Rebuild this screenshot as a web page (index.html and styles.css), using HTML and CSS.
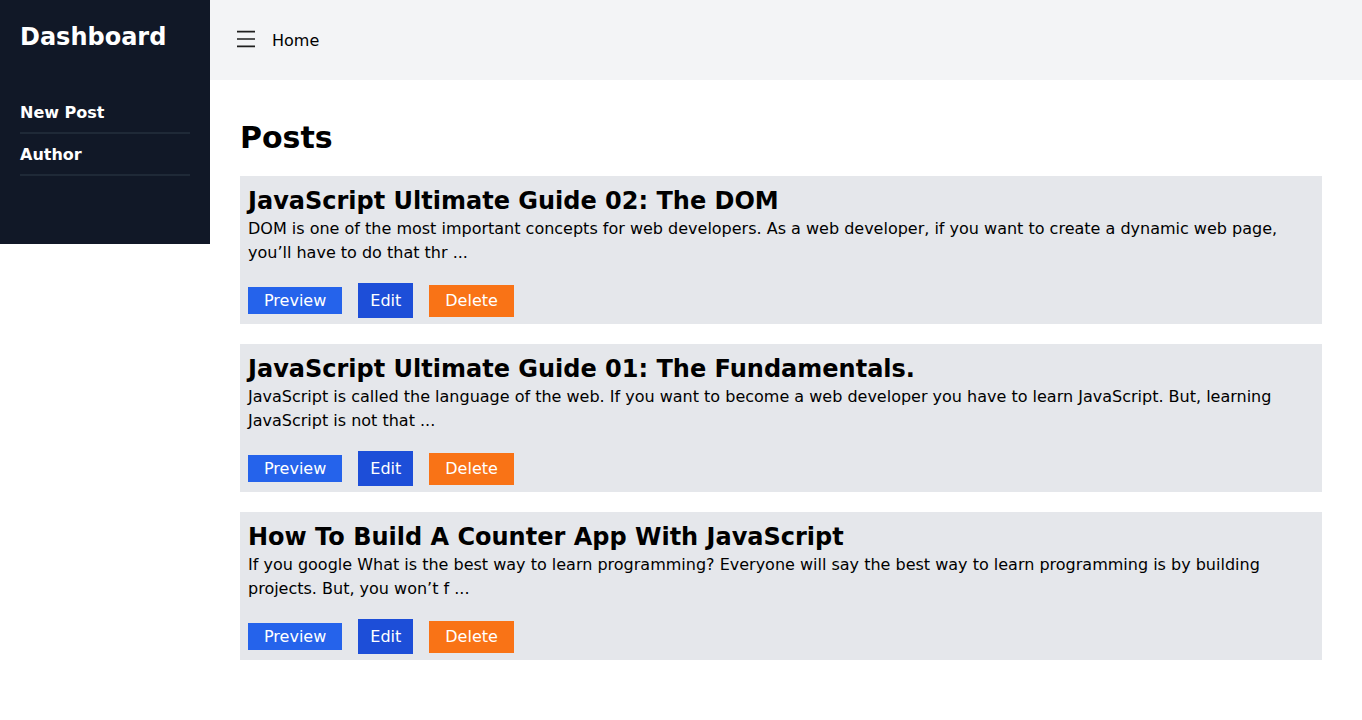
FILE: index.html
```html
<!DOCTYPE html>
<html lang="en">
<head>
<meta charset="utf-8">
<title>Dashboard</title>
<link rel="stylesheet" href="styles.css">
</head>
<body>
<div class="layout">
  <aside class="sidebar">
    <h2 class="brand">Dashboard</h2>
    <nav class="nav">
      <a class="nav-item" href="#">New Post</a>
      <a class="nav-item" href="#">Author</a>
    </nav>
  </aside>
  <div class="content">
    <header class="topbar">
      <svg class="burger" width="18" height="20" viewBox="0 0 18 20" aria-hidden="true">
        <path d="M0 1.6H18M0 9H18M0 16.4H18" stroke="#1f1f1f" stroke-width="1.7" fill="none"/>
      </svg>
      <span class="home">Home</span>
    </header>
    <main class="main">
      <h1 class="page-title">Posts</h1>
      <div class="posts">
        <article class="post">
          <h3 class="post-title">JavaScript Ultimate Guide 02: The DOM</h3>
          <p class="post-body">DOM is one of the most important concepts for web developers. As a web developer, if you want to create a dynamic web page, you’ll have to do that thr ...</p>
          <div class="actions">
            <button class="btn btn-preview">Preview</button>
            <button class="btn btn-edit">Edit</button>
            <button class="btn btn-delete">Delete</button>
          </div>
        </article>
        <article class="post">
          <h3 class="post-title">JavaScript Ultimate Guide 01: The Fundamentals.</h3>
          <p class="post-body">JavaScript is called the language of the web. If you want to become a web developer you have to learn JavaScript. But, learning JavaScript is not that ...</p>
          <div class="actions">
            <button class="btn btn-preview">Preview</button>
            <button class="btn btn-edit">Edit</button>
            <button class="btn btn-delete">Delete</button>
          </div>
        </article>
        <article class="post">
          <h3 class="post-title">How To Build A Counter App With JavaScript</h3>
          <p class="post-body">If you google What is the best way to learn programming? Everyone will say the best way to learn programming is by building projects. But, you won’t f ...</p>
          <div class="actions">
            <button class="btn btn-preview">Preview</button>
            <button class="btn btn-edit">Edit</button>
            <button class="btn btn-delete">Delete</button>
          </div>
        </article>
      </div>
    </main>
  </div>
</div>
</body>
</html>
```

FILE: styles.css
```css
* { box-sizing: border-box; }
html, body {
  margin: 0;
  padding: 0;
  font-family: "DejaVu Sans", sans-serif;
  color: #000;
  background: #fff;
}
.layout {
  display: flex;
  align-items: flex-start;
}
.sidebar {
  width: 210px;
  flex: 0 0 210px;
  background: #111827;
  color: #fff;
  padding: 21px 20px 68px;
}
.brand {
  margin: 0;
  font-size: 24px;
  line-height: 32px;
  font-weight: 700;
}
.nav {
  margin-top: 39px;
  display: flex;
  flex-direction: column;
}
.nav-item {
  display: block;
  color: #fff;
  text-decoration: none;
  font-weight: 700;
  font-size: 16px;
  line-height: 24px;
  padding: 9px 0 7px;
  border-bottom: 2px solid #1f2937;
}
.content {
  flex: 1;
  min-width: 0;
}
.topbar {
  height: 80px;
  background: #f3f4f6;
  display: flex;
  align-items: center;
  padding-left: 27px;
  gap: 17px;
}
.burger {
  display: block;
  flex: 0 0 auto;
}
.home {
  font-size: 16px;
  line-height: 24px;
  padding-top: 1px;
}
.main {
  padding: 20px 40px 40px 30px;
}
.page-title {
  margin: 20px 0;
  font-size: 30px;
  line-height: 36px;
  font-weight: 700;
}
.posts {
  display: flex;
  flex-direction: column;
  gap: 20px;
}
.post {
  background: #e5e7eb;
  padding: 9px 8px 6px;
}
.post-title {
  margin: 0;
  padding-top: 1px;
  font-size: 24px;
  line-height: 31px;
  font-weight: 700;
}
.post-body {
  margin: 0;
  font-size: 16px;
  line-height: 24px;
}
.actions {
  margin-top: 18px;
  display: flex;
  align-items: center;
  gap: 16px;
}
.btn {
  border: 0;
  color: #fff;
  font-family: "DejaVu Sans", sans-serif;
  font-size: 16px;
  line-height: 19px;
  cursor: pointer;
}
.btn-preview {
  background: #2563eb;
  padding: 4px 16px;
}
.btn-edit {
  background: #1d4ed8;
  padding: 8px 12px;
}
.btn-delete {
  background: #f97316;
  padding: 6px 16px 7px;
}
```
